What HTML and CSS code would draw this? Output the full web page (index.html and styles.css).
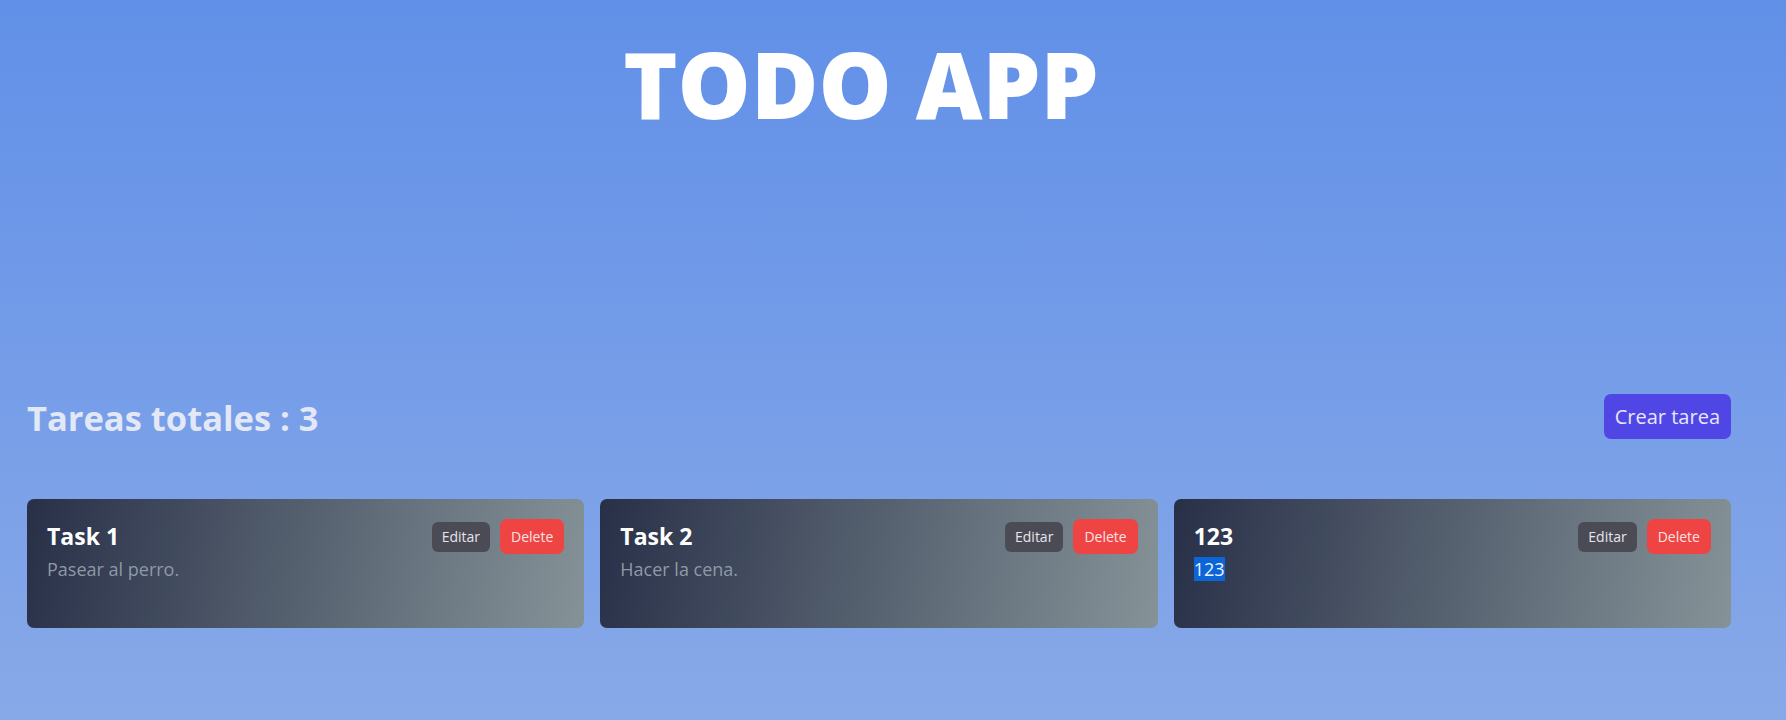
FILE: index.html
```html
<!DOCTYPE html>
<html lang="es">
<head>
<meta charset="utf-8">
<title>TODO APP</title>
<link rel="stylesheet" href="styles.css">
</head>
<body>
<main class="app">
  <h1 class="app-title">TODO APP</h1>
  <div class="toolbar">
    <h2 class="total">Tareas totales : 3</h2>
    <button class="btn-create">Crear tarea</button>
  </div>
  <section class="task-grid">
    <article class="task-card">
      <div class="task-text">
        <h3 class="task-title">Task 1</h3>
        <p class="task-desc">Pasear al perro.</p>
      </div>
      <div class="task-actions">
        <button class="btn-edit">Editar</button>
        <button class="btn-delete">Delete</button>
      </div>
    </article>
    <article class="task-card">
      <div class="task-text">
        <h3 class="task-title">Task 2</h3>
        <p class="task-desc">Hacer la cena.</p>
      </div>
      <div class="task-actions">
        <button class="btn-edit">Editar</button>
        <button class="btn-delete">Delete</button>
      </div>
    </article>
    <article class="task-card">
      <div class="task-text">
        <h3 class="task-title">123</h3>
        <p class="task-desc"><span class="selected">123</span></p>
      </div>
      <div class="task-actions">
        <button class="btn-edit">Editar</button>
        <button class="btn-delete">Delete</button>
      </div>
    </article>
  </section>
</main>
</body>
</html>
```
FILE: styles.css
```css
* { box-sizing: border-box; }
html, body { margin: 0; padding: 0; }
body {
  min-height: 720px;
  background: linear-gradient(to bottom, #6190e8 0px, #88a9e8 720px);
  font-family: "Open Sans", "Noto Sans", "Liberation Sans", sans-serif;
}
.app {
  padding: 0 55px 0 27px;
}
.app-title {
  margin: 0;
  padding: 34px 36px 0 0;
  text-align: center;
  font-size: 92px;
  font-weight: 800;
  line-height: 100px;
  color: #ffffff;
}
.toolbar {
  margin-top: 260px;
  display: flex;
  align-items: center;
  justify-content: space-between;
  height: 45px;
}
.total {
  margin: 4px 0 0 0;
  font-size: 34.5px;
  font-weight: 700;
  color: #e3e8f6;
  line-height: 1;
}
.btn-create {
  height: 45px;
  padding: 0 11px;
  border: 0;
  border-radius: 7px;
  background: #4f46e5;
  color: #e8e6fb;
  font-family: inherit;
  font-size: 20px;
}
.task-grid {
  margin-top: 60px;
  display: grid;
  grid-template-columns: repeat(3, 1fr);
  gap: 16px;
}
.task-card {
  height: 129px;
  border-radius: 7px;
  background: linear-gradient(100deg, #283048 0%, #859398 100%);
  padding: 20px 20px 20px 20px;
  display: flex;
  justify-content: space-between;
  align-items: flex-start;
}
.task-title {
  margin: 2px 0 0 0;
  font-size: 23px;
  font-weight: 700;
  color: #ffffff;
  line-height: 30px;
}
.task-desc {
  margin: 6px 0 0 0;
  font-size: 18px;
  color: #8e99a8;
  line-height: 24px;
}
.selected {
  background: #0b65d6;
  color: #eef4ff;
}
.task-actions {
  display: flex;
  align-items: center;
  gap: 10px;
}
.btn-edit {
  height: 30px;
  padding: 0 10px;
  border: 0;
  border-radius: 6px;
  background: #4b4b56;
  color: #e6e6ea;
  font-family: inherit;
  font-size: 14px;
}
.btn-delete {
  height: 35px;
  padding: 0 11px;
  border: 0;
  border-radius: 7px;
  background: #ef4444;
  color: #fde3e3;
  font-family: inherit;
  font-size: 14px;
}
```
